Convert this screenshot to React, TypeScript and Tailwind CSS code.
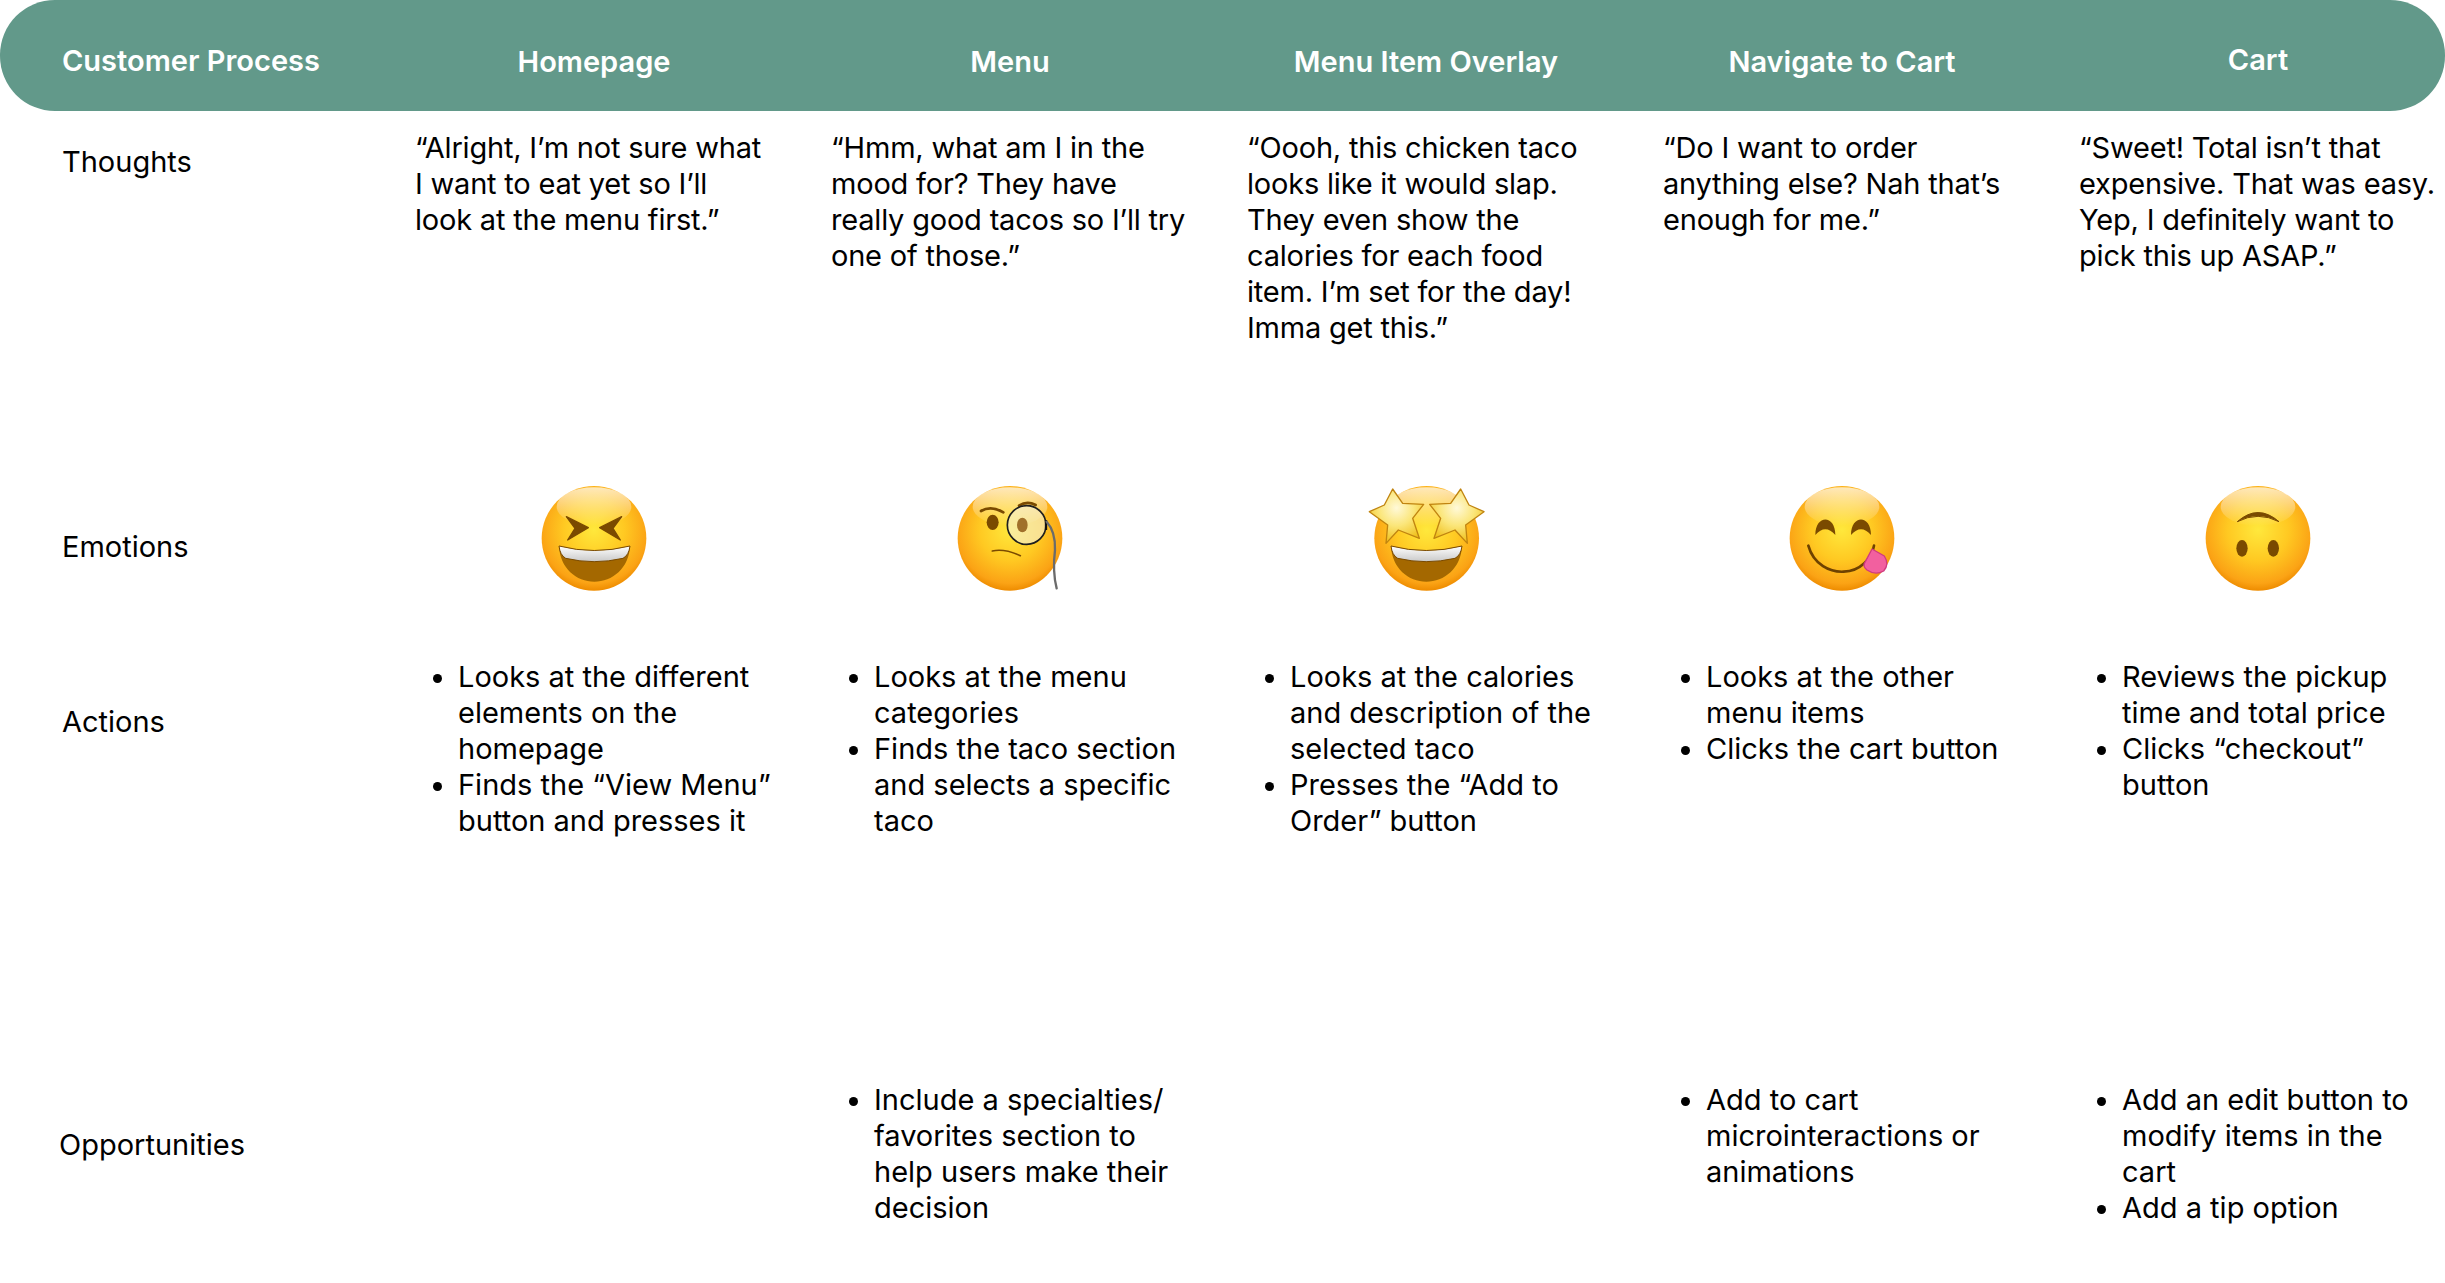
import type { ReactNode } from "react";

const COLS = [
  { name: "Homepage", cls: "w-[358px] pt-[12px] text-center" },
  { name: "Menu", cls: "w-[358px] pt-[12px] text-center" },
  { name: "Menu Item Overlay", cls: "w-[358px] pt-[12px] text-center" },
  { name: "Navigate to Cart", cls: "w-[358px] pt-[12px] text-center" },
  { name: "Cart", cls: "w-[358px] pt-[8px] text-center" },
];

const THOUGHTS = [
  { text: "“Alright, I’m not sure what I want to eat yet so I’ll look at the menu first.”", cls: "w-[350px] pt-[19px] tracking-[-0.2px]" },
  { text: "“Hmm, what am I in the mood for? They have really good tacos so I’ll try one of those.”", cls: "w-[358px] pt-[19px] tracking-[-0.2px]" },
  { text: "“Oooh, this chicken taco looks like it would slap. They even show the calories for each food item. I’m set for the day! Imma get this.”", cls: "w-[358px] pt-[19px] tracking-[-0.2px]" },
  { text: "“Do I want to order anything else? Nah that’s enough for me.”", cls: "w-[358px] pt-[19px] tracking-[-0.2px]" },
  { text: "“Sweet! Total isn’t that expensive. That was easy. Yep, I definitely want to pick this up ASAP.”", cls: "w-[358px] pt-[19px] tracking-[-0.2px]" },
];

const ACTIONS = [
  ["Looks at the different elements on the homepage", "Finds the “View Menu” button and presses it"],
  ["Looks at the menu categories", "Finds the taco section and selects a specific taco"],
  ["Looks at the calories and description of the selected taco", "Presses the “Add to Order” button"],
  ["Looks at the other menu items", "Clicks the cart button"],
  ["Reviews the pickup time and total price", "Clicks “checkout” button"],
];

const OPPORTUNITIES = [
  [],
  ["Include a specialties/ favorites section to help users make their decision"],
  [],
  ["Add to cart microinteractions or animations"],
  ["Add an edit button to modify items in the cart", "Add a tip option"],
];

const BROWN = "#7a4a00";

function Face({ id, cx = 195, children }: { id: string; cx?: number; children: ReactNode }) {
  return (
    <svg viewBox="0 0 390 390" className="h-[130px] w-[130px]">
      <defs>
        <radialGradient id={id} cx="50%" cy="42%" r="58%">
          <stop offset="0%" stopColor="#ffe83c" />
          <stop offset="50%" stopColor="#ffc922" />
          <stop offset="88%" stopColor="#fba315" />
          <stop offset="100%" stopColor="#ee8c00" />
        </radialGradient>
        <linearGradient id={id + "s"} x1="0" y1="0" x2="0" y2="1">
          <stop offset="0%" stopColor="#ffffff" stopOpacity="0.7" />
          <stop offset="100%" stopColor="#ffffff" stopOpacity="0" />
        </linearGradient>
        <linearGradient id={id + "t"} x1="0" y1="0" x2="0" y2="1">
          <stop offset="0%" stopColor="#ffffff" />
          <stop offset="100%" stopColor="#c9c9c9" />
        </linearGradient>
        <radialGradient id={id + "g"} cx="50%" cy="35%" r="65%">
          <stop offset="0%" stopColor="#fff9d8" />
          <stop offset="50%" stopColor="#fbe67a" />
          <stop offset="100%" stopColor="#efbf18" />
        </radialGradient>
      </defs>
      <circle cx={cx} cy="190" r="157" fill={`url(#${id})`} />
      <ellipse cx={cx} cy="95" rx="112" ry="58" fill={`url(#${id}s)`} />
      {children}
    </svg>
  );
}

const STAR = "M95 42 L125 85 L188 88 L155 130 L175 190 L112 165 L75 205 L80 150 L25 110 L70 90 Z";

function Mouth({ id }: { id: string }) {
  return (
    <g>
      <path d="M90 213 Q195 240 303 213 C300 280 250 320 196 320 C142 320 93 280 90 213 Z" fill="#a46800" />
      <path
        d="M90 213 Q195 240 303 213 Q300 240 282 250 Q195 270 110 250 Q93 240 90 213 Z"
        fill={`url(#${id}t)`}
        stroke={BROWN}
        strokeWidth="3"
      />
    </g>
  );
}

const FACES = [
  <Face id="f1" key="f1">
    <path d="M112 125 L178 158 L116 195 L138 160 Z" fill={BROWN} stroke={BROWN} strokeWidth="4" strokeLinejoin="round" />
    <path d="M278 125 L212 158 L274 195 L252 160 Z" fill={BROWN} stroke={BROWN} strokeWidth="4" strokeLinejoin="round" />
    <Mouth id="f1" />
  </Face>,
  <Face id="f2" key="f2">
    <path d="M108 108 Q138 90 175 112" fill="none" stroke={BROWN} strokeWidth="8" strokeLinecap="round" />
    <path d="M222 92 Q246 76 272 90" fill="none" stroke={BROWN} strokeWidth="8" strokeLinecap="round" />
    <ellipse cx="143" cy="142" rx="18" ry="23" fill={BROWN} />
    <path d="M142 228 Q178 220 226 242" fill="none" stroke={BROWN} strokeWidth="5" strokeLinecap="round" />
    <circle cx="245" cy="150" r="58" fill="#f5f2dc" fillOpacity="0.6" stroke="#1f1f1f" strokeWidth="5" />
    <ellipse cx="232" cy="150" rx="16" ry="22" fill="#a0702a" />
    <path d="M303 135 L303 165" stroke="#111111" strokeWidth="7" />
    <path d="M305 140 Q332 170 330 225 Q322 290 335 340" fill="none" stroke="#6b6b6b" strokeWidth="7" strokeLinecap="round" />
  </Face>,
  <Face id="f3" key="f3" cx={197}>
    <Mouth id="f3" />
    <path d={STAR} fill="url(#f3g)" stroke="#c08410" strokeWidth="4" strokeLinejoin="round" />
    <g transform="matrix(-1 0 0 1 394 0)">
      <path d={STAR} fill="url(#f3g)" stroke="#c08410" strokeWidth="4" strokeLinejoin="round" />
    </g>
  </Face>,
  <Face id="f4" key="f4">
    <path d="M115 180 C115 118 175 118 175 180 Q145 145 115 180 Z" fill={BROWN} />
    <path d="M222 180 C222 118 282 118 282 180 Q252 145 222 180 Z" fill={BROWN} />
    <path d="M94 212 C110 270 160 292 200 290 C250 288 285 250 291 212" fill="none" stroke="#6e4200" strokeWidth="8" strokeLinecap="round" />
    <path d="M285 222 L322 243 Q338 268 320 288 Q295 302 270 285 Q255 274 265 260 Z" fill="#f2609f" stroke="#cf3a80" strokeWidth="4" strokeLinejoin="round" />
  </Face>,
  <Face id="f5" key="f5">
    <path d="M133 140 Q195 85 258 140 Q195 108 133 140 Z" fill={BROWN} stroke={BROWN} strokeWidth="3" strokeLinejoin="round" />
    <ellipse cx="147" cy="220" rx="17" ry="25" fill={BROWN} />
    <ellipse cx="241" cy="220" rx="17" ry="25" fill={BROWN} />
  </Face>,
];

function Bullets({ items }: { items: string[] }) {
  return (
    <ul className="list-disc pl-[43px]">
      {items.map((item) => (
        <li key={item}>{item}</li>
      ))}
    </ul>
  );
}

export default function App() {
  return (
    <main className="h-[1283px] w-[2445px] overflow-hidden bg-white font-['Inter',sans-serif] text-[29px] leading-[36px] text-black">
      <header className="grid h-[111px] grid-cols-[415px_repeat(5,416px)] items-center rounded-[55px] bg-[#62998a] font-semibold text-white">
        <span className="pt-[10px] pl-[62px] whitespace-nowrap">Customer Process</span>
        {COLS.map((col) => (
          <span key={col.name} className={col.cls}>
            {col.name}
          </span>
        ))}
      </header>

      <section className="grid grid-cols-[415px_repeat(5,416px)]">
        {/* Thoughts */}
        <div className="h-[334px] pt-[33px] pl-[62px]">Thoughts</div>
        {THOUGHTS.map((t) => (
          <p key={t.text} className={t.cls}>
            {t.text}
          </p>
        ))}

        {/* Emotions */}
        <div className="h-[195px] pt-[84px] pl-[62px]">Emotions</div>
        {FACES.map((face, i) => (
          <div key={i} className="flex w-[358px] justify-center pt-[30px]">
            {face}
          </div>
        ))}

        {/* Actions */}
        <div className="h-[423px] pt-[64px] pl-[62px]">Actions</div>
        {ACTIONS.map((items, i) => (
          <div key={i} className="w-[358px] pt-[19px]">
            <Bullets items={items} />
          </div>
        ))}

        {/* Opportunities */}
        <div className="pt-[64px] pl-[59px]">Opportunities</div>
        {OPPORTUNITIES.map((items, i) => (
          <div key={i} className="w-[358px] pt-[19px]">
            <Bullets items={items} />
          </div>
        ))}
      </section>
    </main>
  );
}
